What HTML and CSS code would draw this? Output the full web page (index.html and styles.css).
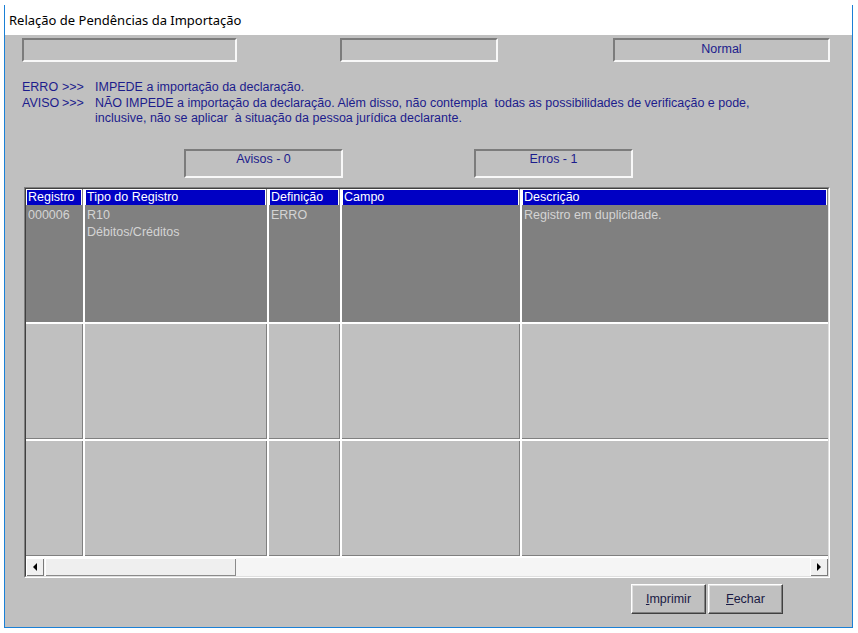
FILE: index.html
```html
<!DOCTYPE html>
<html lang="pt-BR">
<head>
<meta charset="utf-8">
<title>Relação de Pendências da Importação</title>
<link rel="stylesheet" href="styles.css">
</head>
<body>
<div class="window">
  <div class="titlebar">Relação de Pendências da Importação</div>
  <div class="client">
    <div class="status-row">
      <div class="field field-a"></div>
      <div class="field field-b"></div>
      <div class="field field-c">Normal</div>
    </div>

    <div class="legend">
      <span>ERRO</span><span>&gt;&gt;&gt;</span><span>IMPEDE a importação da declaração.</span>
      <span>AVISO</span><span>&gt;&gt;&gt;</span><span>NÃO IMPEDE a importação da declaração. Além disso, não contempla  todas as possibilidades de verificação e pode,
inclusive, não se aplicar  à situação da pessoa jurídica declarante.</span>
    </div>

    <div class="counts">
      <div class="field count">Avisos - 0</div>
      <div class="field count">Erros - 1</div>
    </div>

    <div class="table">
      <div class="table-inner">
        <div class="grid">
          <div class="th">Registro</div>
          <div class="th">Tipo do Registro</div>
          <div class="th">Definição</div>
          <div class="th">Campo</div>
          <div class="th">Descrição</div>

          <div class="td sel">000006</div>
          <div class="td sel">R10<br>Débitos/Créditos</div>
          <div class="td sel">ERRO</div>
          <div class="td sel"></div>
          <div class="td sel last">Registro em duplicidade.</div>

          <div class="td"></div>
          <div class="td"></div>
          <div class="td"></div>
          <div class="td"></div>
          <div class="td last"></div>

          <div class="td"></div>
          <div class="td"></div>
          <div class="td"></div>
          <div class="td"></div>
          <div class="td last"></div>
        </div>
        <div class="hscroll">
          <div class="sb-btn"><span class="arrow-left"></span></div>
          <div class="sb-thumb"></div>
          <div class="sb-track"></div>
          <div class="sb-btn"><span class="arrow-right"></span></div>
        </div>
      </div>
    </div>

    <div class="actions">
      <button class="btn"><u>I</u>mprimir</button>
      <button class="btn"><u>F</u>echar</button>
    </div>
  </div>
</div>
</body>
</html>
```

FILE: styles.css
```css
* { box-sizing: border-box; }

html, body {
  margin: 0;
  padding: 0;
  background: #ffffff;
  width: 858px;
  height: 633px;
  overflow: hidden;
}

body {
  font-family: "Liberation Sans", Arial, sans-serif;
  font-size: 12.5px;
}

.window {
  margin: 5px 0 0 4px;
  width: 849px;
  height: 623px;
  border: 1px solid #1a80d6;
  border-top: none;
  display: flex;
  flex-direction: column;
}

.titlebar {
  height: 30px;
  background: #ffffff;
  color: #000000;
  font-family: "Noto Sans", "Open Sans", sans-serif;
  font-size: 13px;
  line-height: 31px;
  padding-left: 4px;
}

.client {
  flex: 1;
  background: #c0c0c0;
  padding: 3px 0 0 17px;
  display: flex;
  flex-direction: column;
}

/* sunken static boxes */
.field {
  height: 24px;
  border: 2px solid;
  border-color: #7c7c7c #f8f8f8 #f8f8f8 #7c7c7c;
  background: #c0c0c0;
  color: #1c1c8c;
  text-align: center;
  line-height: 19px;
}

.status-row {
  display: flex;
}

.field-a { width: 215px; }
.field-b { width: 158px; margin-left: 103px; }
.field-c { width: 217px; margin-left: 115px; }

.legend {
  margin-top: 18px;
  display: grid;
  grid-template-columns: 40px 33px 1fr;
  color: #1c1c8c;
  line-height: 15.5px;
  white-space: pre;
}

.counts {
  display: flex;
  margin-top: 22px;
  padding-left: 162px;
}

.count {
  width: 159px;
  height: 29px;
  line-height: 17px;
}

.count + .count {
  margin-left: 131px;
}

.table {
  margin-top: 9px;
  margin-left: 2px;
  width: 806px;
  border: 1px solid;
  border-color: #808080 #ffffff #ffffff #808080;
}

.table-inner {
  border: 1px solid;
  border-color: #404040 #dfdfdf #dfdfdf #404040;
}

.grid {
  display: grid;
  grid-template-columns: 57px 182px 71px 178px 1fr;
  column-gap: 2px;
  background: #ffffff;
}

.th {
  height: 18px;
  background: #0000c4;
  color: #ffffff;
  border-right: 1px solid #808080;
  border-bottom: 2px solid #808080;
  box-shadow: inset 1px 1px 0 #ffffff, inset -1px 0 0 #ffffff;
  padding-left: 2px;
  line-height: 16px;
  white-space: nowrap;
  overflow: hidden;
}

.th:last-child { border-right: none; }

.td {
  height: 115px;
  margin-bottom: 2px;
  background: #c0c0c0;
  border-right: 1px solid #808080;
  border-bottom: 1px solid #808080;
  padding: 0 0 0 2px;
  line-height: 17px;
  color: #d4d4d4;
}

.td.sel { background: #808080; }
.td.last { border-right: none; }

.hscroll {
  display: flex;
  height: 18px;
  background: #f4f4f4;
}

.sb-btn {
  width: 18px;
  height: 18px;
  background: #f0f0f0;
  box-shadow: inset 1px 1px 0 #ffffff, inset -1px -1px 0 #7a7a7a;
  display: flex;
  align-items: center;
  justify-content: center;
}

.arrow-left, .arrow-right {
  width: 0;
  height: 0;
  border-top: 4px solid transparent;
  border-bottom: 4px solid transparent;
}

.arrow-left { border-right: 4px solid #000; }
.arrow-right { border-left: 4px solid #000; }

.sb-thumb {
  width: 191px;
  margin-left: 1px;
  background: #efefef;
  box-shadow: inset 1px 1px 0 #ffffff, inset -1px -1px 0 #8a8a8a;
}

.sb-track {
  flex: 1;
  background: #f5f5f5;
}

.actions {
  display: flex;
  justify-content: flex-end;
  gap: 2px;
  margin-top: 6px;
  padding-right: 69px;
}

.btn {
  width: 75px;
  height: 30px;
  background: #c0c0c0;
  border: 1px solid;
  border-color: #ffffff #404040 #404040 #ffffff;
  box-shadow: inset -1px -1px 0 #808080, inset 1px 1px 0 #dfdfdf;
  font-family: "Liberation Sans", Arial, sans-serif;
  font-size: 12.5px;
  color: #1a1a44;
  padding: 0;
}
```
